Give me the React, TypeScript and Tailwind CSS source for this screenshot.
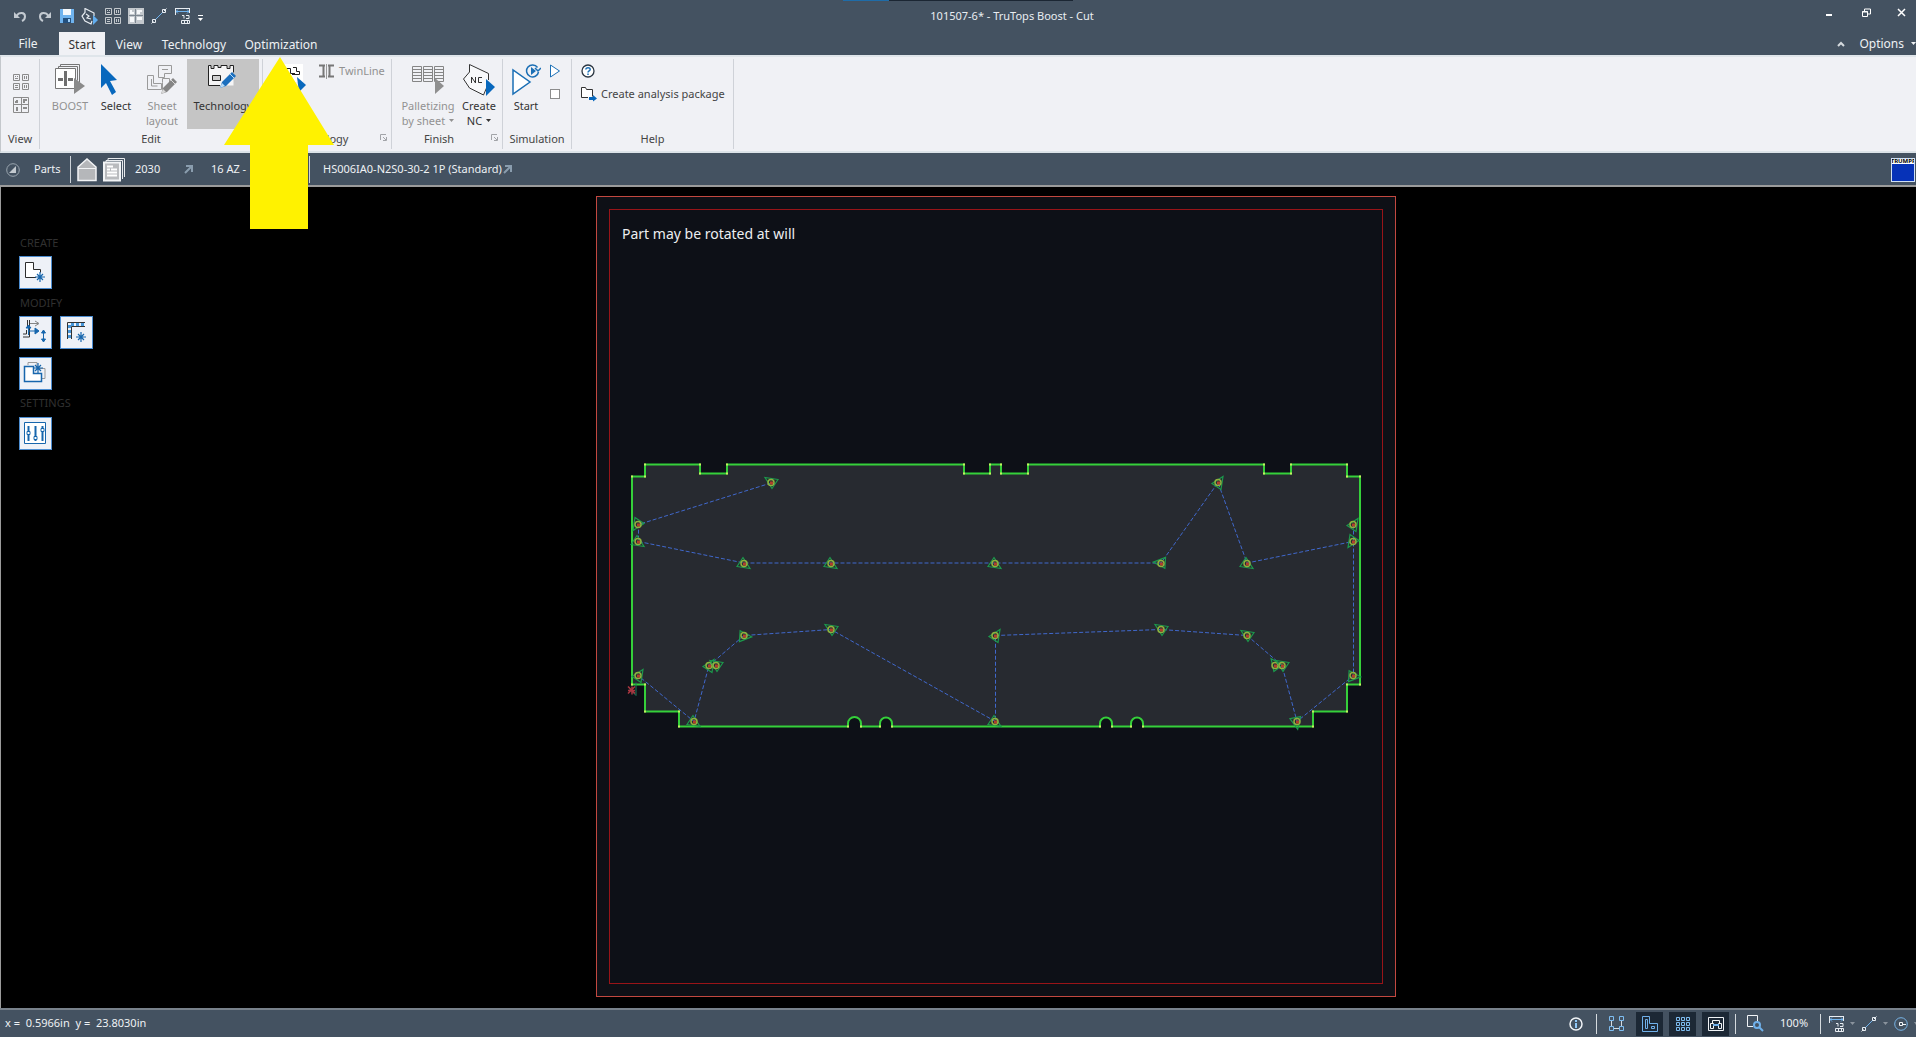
import React from "react";

type Kids = { children?: React.ReactNode };

function Icon({ w, h, children, className = "" }: { w: number; h: number; className?: string } & Kids) {
  return (
    <svg width={w} height={h} viewBox={`0 0 ${w} ${h}`} fill="none" aria-hidden="true" className={`block shrink-0 ${className}`}>
      {children}
    </svg>
  );
}

/* ---------- icons ---------- */

const Undo = ({ flip = false }: { flip?: boolean }) => (
  <Icon w={13} h={13} className={flip ? "-scale-x-100" : ""}>
    <path d="M0 2v6h6z" fill="#c3cad1" />
    <path d="M2.500 6C5 2 11 2 11 6.500c0 2-1 3.500-3 4.500" stroke="#c3cad1" strokeWidth="2" />
  </Icon>
);

const Save = () => (
  <Icon w={14} h={14}>
    <path d="M0 0h14v14H0z" fill="#6fb3ee" />
    <path d="M3 0h8v6H3z" fill="#f4f8fc" />
    <path d="M3 9h8v5H3z" fill="#23507f" />
    <path d="M8 10h2v3H8z" fill="#9fd0fa" />
  </Icon>
);

const NcSmall = () => (
  <Icon w={17} h={17}>
    <path d="M11 4L4 .5v4L1 8l3 5 6 3 1-3M11 4l2 1v3M5 6l3 2-2 2 4 1" stroke="#e8edf2" strokeWidth="1.200" />
    <path d="M12 7l5 5-5 5z" fill="#62aef0" />
  </Icon>
);

function QuadIcon({ color }: { color: string }) {
  return (
    <Icon w={16} h={16}>
      <g stroke={color}>
        <path d="M.5.5h6v6h-6zM9.500.5h6v6h-6zM.5 9.500h6v6h-6zM9.500 9.500h6v6h-6z" />
        <path d="M2 2.500h1M4 2.500h1M2 4.500h3M11.500 2v3M13.500 2v3M2 11.500h3M2 13.500h3M11.500 11v3M13.500 11v3" />
      </g>
    </Icon>
  );
}

function NestIcon({ color, mark }: { color: string; mark: string }) {
  return (
    <Icon w={16} h={16}>
      <path d="M.5.5h15v15H.5zM8.500 0v16M0 7.500h16" stroke={color} />
      <path d="M3 3h2v3H2V4h1zM10 2h4v2h-2v2h-2zM3 10h2v4H3zM10 10h4v2h-4z" fill={mark} />
    </Icon>
  );
}

const NestSolid = () => (
  <Icon w={16} h={16}>
    <path d="M0 0h16v16H0z" fill="#c3c8cd" />
    <path d="M2 2h2v2h2v2H2zM9 2h5v2h-2v2H9zM2 9h4v5H2zM9 9h5v3H9z" fill="#f6f8fa" />
    <path d="M7.500 1v14M1 7.500h14" stroke="#7d8791" />
  </Icon>
);

const Measure = () => (
  <Icon w={16} h={16}>
    <path d="M1 3.500h13M3 1.500l-2 2 2 2M12 1.500l2 2-2 2" stroke="#6fb3ee" />
    <path d="M0 .5h15M.5 0v7M14.500 0v5M7 7.500h2v3M11 7.500h3v3h-3M6.500 12.500h8v3h-8zM9.500 12v3M12.500 12v3" stroke="#e8edf2" />
  </Icon>
);

const LineTool = () => (
  <Icon w={16} h={16}>
    <path d="M4 12L12 4" stroke="#6fb3ee" />
    <path d="M.5 15.500l2-2M13 3l2.500-2.500" stroke="#e8edf2" />
    <path d="M1.500 11.500h3v3h-3zM11.500 1.500h3v3h-3z" stroke="#e8edf2" />
  </Icon>
);

const Caret = ({ className = "" }: { className?: string }) => (
  <Icon w={5} h={3} className={className}>
    <path d="M0 0h5L2.500 3z" fill="currentColor" />
  </Icon>
);

const Launcher = () => (
  <Icon w={7} h={7}>
    <path d="M.5 6V.5H6M3 3l3 3M6.500 3v3.500H3" stroke="#a2a4a8" />
  </Icon>
);

const BoostIcon = () => (
  <Icon w={30} h={30}>
    <path d="M5.500 3V.5h19v18M3.500 4V2.500h19v14" stroke="#757575" />
    <path d="M.5 4.500h20v20H.5z" fill="#fff" stroke="#757575" />
    <path d="M3 15.500h5M13 15.500h5M10.500 7v15" stroke="#6f6f6f" strokeWidth="3" />
    <path d="M19 14l11 8-11 8z" fill="#8a8a8a" />
  </Icon>
);

const SelectIcon = () => (
  <Icon w={17} h={31}>
    <path d="M0 0l16 16-7 1 6 11-4 3-6-12-5 5z" fill="#0868bd" />
  </Icon>
);

const Pencil = ({ x, y, color, light }: { x: number; y: number; color: string; light: string }) => (
  <g transform={`translate(${x} ${y})`}>
    <path d="M0 16l2-6L12 0l4 4L6 14z" fill={color} />
    <path d="M0 16l2-5 3 3z" fill={light} />
    <path d="M10 2l4 4" stroke={light} />
  </g>
);

const SheetLayoutIcon = () => (
  <Icon w={30} h={30}>
    <path d="M11.500 1.500h13v8h-7v4h-6zM15 5.500h6M.5 11.500h6v8h8v6H.5zM4.500 15v7h6M15.500 14.500h7v5l-5 6h-2v-7z" stroke="#9a9a9a" />
    <Pencil x={14} y={14} color="#858585" light="#d8d8d8" />
  </Icon>
);

const TechIcon = () => (
  <Icon w={30} h={26}>
    <path d="M.5 21.500v-20H3v3h3v-3h4v2h3v-2h6v3h3v-3h3.500v20z" fill="#f5f5f6" />
    <path d="M12 21.500H.5v-20H3v3h3v-3h4v2h3v-2h6v3h3v-3h3.500v7" stroke="#222" />
    <path d="M4.500 11.500h8v5h-8z" fill="#cfcfcf" stroke="#222" />
    <Pencil x={12} y={8} color="#1b6fbe" light="#b9dcf8" />
  </Icon>
);

const CutIcon = () => (
  <Icon w={30} h={30}>
    <path d="M8 0h19v18H8z" fill="#fff" />
    <path d="M10 4.500h4.500v5H19M17 3.500h3.500v4h3v3H16" stroke="#222" />
    <path d="M21 13l9 8-7 7z" fill="#0868bd" />
  </Icon>
);

const TwinIcon = () => (
  <Icon w={15} h={15}>
    <path d="M0 1.500h6M0 12.500h6M9 1.500h6M9 12.500h6M4.500 2v11M10.500 2v11" stroke="#777" strokeWidth="2" />
    <path d="M7.500 0v15" stroke="#999" />
  </Icon>
);

const PalletIcon = () => (
  <Icon w={33} h={30}>
    {[0, 11, 22].map((x) => (
      <path key={x} d={`M${x + 0.5} 2.500h9v15h-9zM${x} 5.500h10M${x} 8.500h10M${x} 11.500h10M${x} 14.500h10`} stroke="#858585" />
    ))}
    <path d="M23 14l9 8-9 8z" fill="#8f8f8f" />
  </Icon>
);

const NcIcon = () => (
  <Icon w={33} h={32}>
    <path d="M6.500.5l19 9v14l-5 7.500-14-7L.5 15.500l6-8z" fill="#f8f9fb" />
    <path d="M23.500 24l-3 7-14-7-6-9 6-7v-7.500l19 9V16" stroke="#333" />
    <path d="M8.500 19v-6l4 6v-6M19 13.500h-3.500v5H19" stroke="#333" />
    <path d="M23 15l9 8-9 9z" fill="#0868bd" />
  </Icon>
);

const SimIcon = () => (
  <Icon w={29} h={32}>
    <path d="M1 6v24l17-12z" fill="#fff" stroke="#1b6fb5" strokeWidth="1.500" />
    <path d="M26.500 8a6 6 0 1 1-1-4.500M29 4l-3 3-3-3" stroke="#1b6fb5" strokeWidth="1.500" />
    <path d="M19 3l5 4-5 4z" fill="#1b6fb5" />
  </Icon>
);

const HelpIcon = () => (
  <Icon w={14} h={14}>
    <circle cx="7" cy="7" r="6" fill="#fff" stroke="#2b3642" strokeWidth="1.300" />
    <path d="M4.800 5.500C5 3 9.300 3 9.200 5.500 9.200 7 7 6.800 7 8.500M7 9.500v1.500" stroke="#1b6fb5" strokeWidth="1.500" />
  </Icon>
);

const PackageIcon = () => (
  <Icon w={16} h={16}>
    <path d="M7 11.500H.5v-10h4l1 2h6v7" fill="#fff" stroke="#333" />
    <path d="M8 11h4V9l4 3.500-4 3V14H8z" fill="#0868bd" />
  </Icon>
);

const Star = ({ x, y }: { x: number; y: number }) => (
  <path d={`M${x} ${y - 5}v10M${x - 5} ${y}h10M${x - 3} ${y - 3}l6 6M${x + 3} ${y - 3}l-6 6`} stroke="#1766ad" strokeWidth="1.200" />
);

/* ---------- ribbon ---------- */

function RibbonGroup({ label, width, launcher, children }: { label: string; width: string; launcher?: boolean } & Kids) {
  return (
    <section aria-label={label} className={`${width} relative flex shrink-0 flex-col border-r border-[#cfd2d8]`}>
      <div className="flex h-[72px] items-start">{children}</div>
      <div className={`text-center leading-4 ${launcher ? "pr-4" : ""}`}>{label}</div>
      {launcher && (
        <button aria-label={`${label} settings`} className="absolute right-1 bottom-2">
          <Launcher />
        </button>
      )}
    </section>
  );
}

function BigButton({ icon, lines, width, disabled, active, caret }: { icon: React.ReactNode; lines: string[]; width: string; disabled?: boolean; active?: boolean; caret?: boolean }) {
  return (
    <button
      disabled={disabled}
      className={`${width} flex h-[70px] shrink-0 flex-col items-center pt-[5px] leading-[15px] ${active ? "bg-[#c5c5c5]" : ""} ${disabled ? "text-[#929292]" : "text-[#333]"}`}
    >
      <span className="flex h-[34px] items-start">{icon}</span>
      {lines.map((l, i) => (
        <span key={l} className="flex items-center gap-1 whitespace-nowrap">
          {l}
          {caret && i === lines.length - 1 && <Caret />}
        </span>
      ))}
    </button>
  );
}

function Ribbon() {
  return (
    <div className="flex h-[98px] shrink-0 border-y-2 border-t-[#dfe5ea] border-b-[#dce3e8] border-l border-l-[#c4c8cc] bg-[#f0f1f5] py-[2px] text-[#444]">
      <RibbonGroup label="View" width="w-[39px]">
        <div className="flex w-full flex-col items-center gap-[7px] pt-[15px] pl-[2px]">
          <button aria-label="Overview"><QuadIcon color="#8b8b8b" /></button>
          <button aria-label="Nesting"><NestIcon color="#8b8b8b" mark="#8b8b8b" /></button>
        </div>
      </RibbonGroup>
      <RibbonGroup label="Edit" width="w-[223px]">
        <div className="flex pl-2">
          <BigButton icon={<BoostIcon />} lines={["BOOST"]} width="w-11" disabled />
          <BigButton icon={<span className="pr-[14px]"><SelectIcon /></span>} lines={["Select"]} width="w-12" />
          <BigButton icon={<SheetLayoutIcon />} lines={["Sheet", "layout"]} width="w-11" disabled />
          <span className="w-[3px]" />
          <BigButton icon={<TechIcon />} lines={["Technology"]} width="w-[72px]" active />
        </div>
      </RibbonGroup>
      <RibbonGroup label="Technology" width="w-[129px]" launcher>
        <BigButton icon={<CutIcon />} lines={["Cut"]} width="w-[56px]" />
        <button disabled className="flex h-[22px] items-center gap-[5px] pt-[2px] text-[#929292]">
          <TwinIcon />
          TwinLine
        </button>
      </RibbonGroup>
      <RibbonGroup label="Finish" width="w-[111px]" launcher>
        <div className="flex pl-2">
          <BigButton icon={<PalletIcon />} lines={["Palletizing", "by sheet"]} width="w-14" disabled caret />
          <BigButton icon={<NcIcon />} lines={["Create", "NC"]} width="w-[46px]" caret />
        </div>
      </RibbonGroup>
      <RibbonGroup label="Simulation" width="w-[69px]">
        <div className="flex gap-[2px] pl-px">
          <BigButton icon={<SimIcon />} lines={["Start"]} width="w-11" />
          <div className="flex flex-col gap-[11px] pt-[5px]">
            <button aria-label="Step">
              <Icon w={10} h={14}><path d="M.5 1v12l9-6z" fill="#fff" stroke="#1b6fb5" /></Icon>
            </button>
            <button aria-label="Stop" className="size-[10px] border border-[#8c8c8c] bg-white" />
          </div>
        </div>
      </RibbonGroup>
      <RibbonGroup label="Help" width="w-[162px]">
        <div className="flex flex-col items-start gap-2 pt-[5px] pl-[9px]">
          <button aria-label="Help"><HelpIcon /></button>
          <button className="flex items-center gap-1 whitespace-nowrap">
            <PackageIcon />
            Create analysis package
          </button>
        </div>
      </RibbonGroup>
    </div>
  );
}

/* ---------- title and tabs ---------- */

function TitleBar() {
  return (
    <header className="relative flex h-8 shrink-0 items-center">
      <div className="absolute top-0 left-[44%] flex h-px w-[12%]">
        <span className="w-1/5 bg-[#1f6ca8]" />
        <span className="flex-1 bg-[#1b2633]" />
      </div>
      <div className="flex h-6 items-center pl-[14px]">
        <button aria-label="Undo" className="w-6"><Undo /></button>
        <button aria-label="Redo" className="w-[22px]"><Undo flip /></button>
        <button aria-label="Save" className="w-[21px]"><Save /></button>
        <button aria-label="Create NC" className="w-6"><NcSmall /></button>
        <button aria-label="Overview" className="w-[23px]"><QuadIcon color="#c3c8cd" /></button>
        <button aria-label="Nesting" className="w-[23px]"><NestSolid /></button>
        <button aria-label="Line" className="w-6"><LineTool /></button>
        <button aria-label="Measure" className="w-[23px]"><Measure /></button>
        <button aria-label="Customize toolbar" className="flex flex-col items-center gap-[2px] pt-1 text-white">
          <span className="h-px w-[5px] bg-white" />
          <Caret />
        </button>
      </div>
      <h1 className="absolute top-2 right-0 left-0 pl-[108px] text-center text-[11px] leading-4 text-[#e9edf1]">101507-6* - TruTops Boost - Cut</h1>
      <div className="absolute top-0 right-0 flex h-6 items-center gap-[26px] pr-[10px]">
        <button aria-label="Minimize" className="pt-[3px]"><Icon w={8} h={8}><path d="M1 5h6" stroke="#fff" strokeWidth="2" /></Icon></button>
        <button aria-label="Restore" className="pl-[3px]"><Icon w={9} h={9}><path d="M2.500 3V1h6v5H6M.5 3.500h5v5h-5zM0 4h6" stroke="#fff" /></Icon></button>
        <button aria-label="Close"><Icon w={9} h={9}><path d="M1 1l7 7M8 1L1 8" stroke="#fff" strokeWidth="1.500" /></Icon></button>
      </div>
    </header>
  );
}

function Tabs() {
  return (
    <nav className="flex h-[23px] shrink-0 items-stretch text-[12px] leading-[23px] text-[#eef1f4]">
      <button className="w-[59px] pr-[3px]">File</button>
      <button className="w-[46px] bg-[#f0f1f5] pt-px text-[#333]">Start</button>
      <button className="w-12 pt-px">View</button>
      <button className="w-[82px] pt-px">Technology</button>
      <button className="w-[92px] pt-px">Optimization</button>
      <div className="ml-auto flex items-center gap-[14px]">
        <button aria-label="Collapse ribbon"><Icon w={8} h={6}><path d="M1 5l3-3 3 3" stroke="#d5dade" strokeWidth="2" /></Icon></button>
        <button className="flex items-center gap-[7px]">Options <Caret /></button>
      </div>
    </nav>
  );
}

/* ---------- breadcrumb ---------- */

const Jump = () => (
  <Icon w={9} h={9}>
    <path d="M1 8l6-6M2 1h6v6" stroke="#8a9dae" strokeWidth="2" />
  </Icon>
);

function Breadcrumb() {
  return (
    <div className="flex h-8 shrink-0 items-center pt-px text-[11px] text-[#eef1f4]">
      <button aria-label="Navigate" className="ml-[6px]">
        <Icon w={14} h={14}>
          <circle cx="7" cy="7" r="6.300" stroke="#9aa5af" />
          <path d="M10 3v7H3z" fill="#c3c9cf" />
        </Icon>
      </button>
      <a href="#parts" className="ml-[14px] w-9">Parts</a>
      <span className="h-[27px] w-px bg-[#cdd3d9]" />
      <button aria-label="Home" className="ml-[6px]">
        <Icon w={20} h={24}><path d="M1 22.500V9l9-8 9 8v13.500z" fill="#b5b7ba" stroke="#f2f4f6" strokeWidth="1.500" /><path d="M1 10.500h18" stroke="#f2f4f6" /></Icon>
      </button>
      <button aria-label="Jobs" className="ml-[6px]">
        <Icon w={22} h={24}>
          <path d="M5 3V.5h16.500V19M3 4V2.500h16.500V21" stroke="#e8ebee" />
          <path d="M1 4.500h16v18H1z" fill="#b9bbbe" stroke="#f2f4f6" strokeWidth="2" />
          <path d="M4 8.500h6M4 11.500h3M8 11.500h6M4 14.500h10M4 17.500h10" stroke="#fff" strokeWidth="2" />
        </Icon>
      </button>
      <a href="#job" className="ml-[10px] w-[49px]">2030</a>
      <Jump />
      <a href="#sheet" className="ml-[18px] w-[98px]">16 AZ -</a>
      <span className="h-[27px] w-px bg-[#cdd3d9]" />
      <a href="#part" className="mr-px ml-[13px] whitespace-nowrap">HS006IA0-N2S0-30-2 1P (Standard)</a>
      <Jump />
      <div aria-label="TRUMPF" className="mr-px ml-auto flex size-6 flex-col overflow-hidden border border-[#cfe0f5] bg-[#0632b8]">
        <span className="flex h-[5px] items-center justify-center bg-white text-[6px] font-bold text-black">TRUMPF</span>
      </div>
    </div>
  );
}

/* ---------- drawing ---------- */

type Pt = [number, number, number];

const holes: Pt[] = [
  [771, 483, 180], [638, 525, 90], [638, 542, 0], [744, 564, 0], [831, 564, 0], [995, 564, 0],
  [1161, 564, 150], [1218, 483, 270], [1247, 564, 0], [1353, 525, 270], [1353, 542, 90],
  [744, 636, 330], [831, 630, 180], [709, 666, 270], [716, 666, 180], [638, 676, 270],
  [694, 722, 0], [995, 722, 0], [995, 636, 270], [1161, 630, 180], [1247, 636, 180],
  [1275, 666, 200], [1282, 666, 180], [1353, 676, 330], [1297, 722, 45],
];

const travel = [
  "M771 483.500L638.500 525V542L744 563.500H1161L1218 483L1247 563.500L1353 542",
  "M1353.500 525V676L1297 722L1282 666L1247 636L1161 630L995.500 636V722L831 630L744 636L709 666L694 722L638 676",
];

const outline =
  "M632 477H645V465H700V474H727V465H964V474H990V465H1001V474H1028V465H1264V474H1291V465H1347V477H1360V685H1347V712H1313V727H1143V724A6 6 0 0 0 1131 724V727H1112V724A6 6 0 0 0 1100 724V727H892V724A6 6 0 0 0 880 724V727H861V724A6 6 0 0 0 848 724V727H679V712H645V685H632Z";

const corners = [
  [632, 477], [645, 477], [645, 465], [700, 465], [700, 474], [727, 474], [727, 465], [964, 465], [964, 474], [990, 474], [990, 465],
  [1001, 465], [1001, 474], [1028, 474], [1028, 465], [1264, 465], [1264, 474], [1291, 474], [1291, 465], [1347, 465], [1347, 477],
  [1360, 477], [1360, 685], [1347, 685], [1347, 712], [1313, 712], [1313, 727], [1143, 727], [1131, 727], [1112, 727], [1100, 727],
  [892, 727], [880, 727], [861, 727], [848, 727], [679, 727], [679, 712], [645, 712], [645, 685], [632, 685],
];

function Sheet() {
  return (
    <div className="flex flex-col border border-[#c24840] bg-[#0e1016] p-3">
      <div className="relative flex-1 border border-[#981418] bg-[#0d1017]">
        <p className="absolute top-[14px] left-3 text-[14px] leading-5 text-[#eceef0]">Part may be rotated at will</p>
        <svg viewBox="610 211 772 772" className="absolute inset-0 h-full w-full" role="img" aria-label="Nested part with cutting path">
          <path d={outline} fill="#272a30" stroke="#35d03a" strokeWidth="2" />
          {corners.map(([x, y]) => (
            <path key={`${x}-${y}`} d={`M${x - 1} ${y - 1}h2v2h-2z`} fill="#c4ee60" />
          ))}
          {travel.map((d) => (
            <path key={d} d={d} fill="none" stroke="#4068cc" strokeDasharray="4 2" />
          ))}
          {holes.map(([x, y, r]) => (
            <g key={`${x}-${y}`} fill="none">
              <path d="M-7 3L6 5L-1-6Z" transform={`translate(${x} ${y}) rotate(${r})`} stroke="#1c9a4c" strokeWidth="1.200" />
              <circle cx={x} cy={y} r="3" stroke="#8fb03f" strokeWidth="1.500" />
              <path d={`M${x - 1} ${y - 1}h3v3h-3z`} fill="#b0402c" />
            </g>
          ))}
          <path d="M636 683v13l-6-6" fill="none" stroke="#1d7a5a" />
          <path d="M628 687l7 7M635 687l-7 7M628 691h7M632 687v8" stroke="#a93640" strokeWidth="1.500" />
        </svg>
      </div>
    </div>
  );
}

function Tool({ label, children }: { label: string } & Kids) {
  return (
    <button aria-label={label} className="flex size-[33px] items-center justify-center border border-[#4d8dd0] bg-[#eef1f7]">
      <Icon w={25} h={25}>{children}</Icon>
    </button>
  );
}

function ToolPanel() {
  return (
    <aside className="flex flex-col items-start pt-12 pl-[18px] text-[11px] leading-4 text-[#303030]">
      <h2 className="pl-px">CREATE</h2>
      <div className="mt-[5px] mb-[6px]">
        <Tool label="Create contour">
          <path d="M13 17.500H2.500v-15h8v7h7v3" fill="#fff" stroke="#2d2d2d" />
          <Star x={17} y={17} />
        </Tool>
      </div>
      <h2 className="pl-px">MODIFY</h2>
      <div className="mt-[5px] grid grid-cols-2 gap-2">
        <Tool label="Move lead-in">
          <path d="M4.500 0v7M6.500 0v17H0M3.500 10v4H0" stroke="#333" />
          <path d="M7 3.500h8M12 1l4 2.500L12 6" stroke="#858585" />
          <path d="M5.500 15V8M3 8l2.500-3L8 8zM6 11h8M12 8l4 3-4 3z" stroke="#1766ad" fill="#1766ad" />
          <path d="M20.500 12v8M18.500 13l2-3 2 3zM18.500 19l2 3 2-3z" stroke="#1766ad" fill="#1766ad" />
        </Tool>
        <Tool label="Add microjoint">
          <path d="M3.500 19V2.500H21M7.500 19V6.500H21" stroke="#333" />
          <path d="M5.500 18V4.500H21" stroke="#4595d8" strokeWidth="3" strokeDasharray="3 2" />
          <Star x={17} y={17} />
        </Tool>
        <Tool label="Duplicate contour">
          <path d="M5 4V1.500h9v6h8v10h-3" stroke="#999" />
          <path d="M1.500 5.500h9v7h8v8h-17z" fill="#fff" stroke="#1766ad" strokeWidth="1.500" />
          <Star x={15} y={7} />
        </Tool>
      </div>
      <h2 className="mt-[5px] pl-px">SETTINGS</h2>
      <div className="mt-[6px]">
        <Tool label="Settings">
          <path d="M1.500 1.500h21v21h-21z" fill="#fff" stroke="#1766ad" />
          <path d="M5.500 5v15M12.500 5v15M19.500 5v15" stroke="#1766ad" strokeWidth="2" />
          <path d="M4 10.500h3v3H4zM11 15.500h3v3h-3zM18 7.500h3v3h-3z" fill="#fff" stroke="#1766ad" />
        </Tool>
      </div>
    </aside>
  );
}

/* ---------- status bar ---------- */

const Divider = () => <span className="h-5 w-px shrink-0 bg-[#d5dade]" />;

function StatusToggle({ label, children }: { label: string } & Kids) {
  return (
    <button aria-label={label} aria-pressed="true" className="flex h-6 w-[27px] items-center justify-center bg-[#1c2835]">
      <Icon w={16} h={16}>{children}</Icon>
    </button>
  );
}

function StatusBar() {
  return (
    <footer className="flex h-[29px] shrink-0 items-center overflow-hidden border-t-2 border-[#78818b] text-[11px] text-[#eef1f4]">
      <span className="pl-[5px] whitespace-pre">x =  0.5966in  y =  23.8030in</span>
      <div className="ml-auto flex items-center">
        <button aria-label="Information">
          <Icon w={14} h={14}>
            <circle cx="7" cy="7" r="6" stroke="#f0f3f6" strokeWidth="1.500" />
            <path d="M7 3v2M7 6v5" stroke="#8fc8f8" strokeWidth="2" />
          </Icon>
        </button>
        <span className="w-[13px]" />
        <Divider />
        <button aria-label="Snap" className="mx-3">
          <Icon w={15} h={15}>
            <path d="M2.500 4v7M12.500 4v7M4 12.500h7" stroke="#d5dade" />
            <path d="M.5.5h4v4h-4zM10.500.5h4v4h-4zM.5 10.500h4v4h-4zM10.500 10.500h4v4h-4z" stroke="#7dbcf0" />
          </Icon>
        </button>
        <div className="flex gap-[6px] pr-[6px]">
          <StatusToggle label="Show part">
            <path d="M.5 15.500V.5h7v7h8v8zM3.500 3.500h2v9h-2zM9.500 10.500h3v2h-3z" stroke="#6fb0ea" />
          </StatusToggle>
          <StatusToggle label="Show grid">
            {[0, 5, 10].map((y) => [0, 5, 10].map((x) => <path key={`${x}-${y}`} d={`M${x + 1.5} ${y + 1.5}h3v3h-3z`} stroke="#7dbcf0" />))}
          </StatusToggle>
          <StatusToggle label="Show head">
            <path d="M.5 1.500h15v13H.5zM2.500 12.500v-5h3v5zM10.500 12.500v-5h3v5zM4.500 7V4.500h7V7" stroke="#f0f3f6" />
            <path d="M5 9h6" stroke="#6fb0ea" strokeWidth="2" />
          </StatusToggle>
        </div>
        <Divider />
        <button aria-label="Zoom area" className="mr-4 ml-[11px]">
          <Icon w={17} h={17}>
            <path d="M6 11.500H.5V.5h10v6" stroke="#f0f3f6" />
            <circle cx="10" cy="10" r="3" stroke="#6fb0ea" strokeWidth="2" />
            <path d="M12 12l4 4" stroke="#6fb0ea" strokeWidth="2" />
          </Icon>
        </button>
        <span className="w-10">100%</span>
        <Divider />
        <div className="flex items-center gap-[6px] pl-2 text-[#8a939d]">
          <button aria-label="Measure" className="flex items-center gap-[5px]"><Measure /><Caret /></button>
          <button aria-label="Line" className="flex items-center gap-[6px]"><LineTool /><Caret /></button>
          <button aria-label="Circle" className="flex items-center gap-[6px]">
            <Icon w={14} h={14}>
              <circle cx="7" cy="7" r="6.300" stroke="#78b4e6" />
              <path d="M5.500 5.500h3v3h-3zM9 7.500h3" stroke="#f0f3f6" />
            </Icon>
            <Icon w={2} h={3}><path d="M0 0h4L2 3z" fill="currentColor" /></Icon>
          </button>
        </div>
      </div>
    </footer>
  );
}

export default function App() {
  return (
    <div className="relative flex h-screen flex-col overflow-hidden bg-[#445261] font-['Noto_Sans',sans-serif] text-[11px]">
      <TitleBar />
      <Tabs />
      <Ribbon />
      <Breadcrumb />
      <main className="grid min-h-0 flex-1 grid-cols-[595fr_800fr_520fr] border-t-2 border-l border-[#9b9b9b] bg-black">
        <ToolPanel />
        <div className="grid pt-[9px] pb-[11px]">
          <Sheet />
        </div>
      </main>
      <StatusBar />
      <Icon w={112} h={174} className="pointer-events-none absolute top-14 left-[223px]">
        <path d="M57 1L111 89H85V173H27V89H1z" fill="#fff200" />
      </Icon>
    </div>
  );
}
